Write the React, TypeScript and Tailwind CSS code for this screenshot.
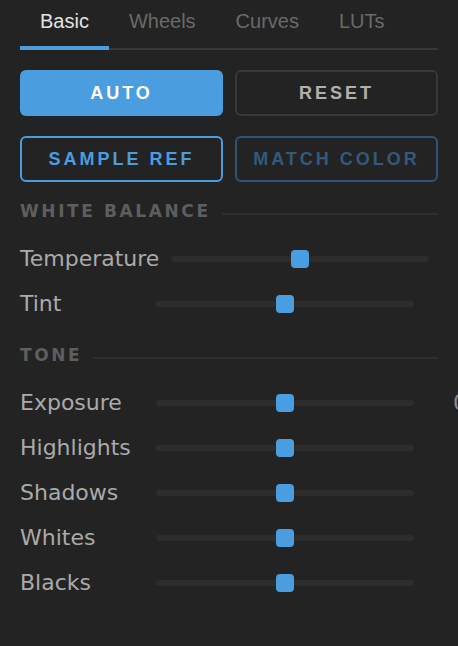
import { useState } from "react"

const tabs = ["Basic", "Wheels", "Curves", "LUTs"]

type Adjustment = { label: string; value: string }

const whiteBalance: Adjustment[] = [
  { label: "Temperature", value: "0" },
  { label: "Tint", value: "0" },
]

const tone: Adjustment[] = [
  { label: "Exposure", value: "0.00" },
  { label: "Highlights", value: "0" },
  { label: "Shadows", value: "0" },
  { label: "Whites", value: "0" },
  { label: "Blacks", value: "0" },
]

function SectionHeading({ title }: { title: string }) {
  return (
    <div className="mt-[19px] mb-[15px] flex h-5 items-center gap-[11px]">
      <span className="font-['DejaVu_Sans',sans-serif] text-[17px] leading-5 font-bold tracking-[2.6px] text-[#5e5e5e]">
        {title}
      </span>
      <div className="mt-[6px] h-[2px] flex-1 bg-[#2e2e2e]" />
    </div>
  )
}

function SliderRow({ label, value }: Adjustment) {
  return (
    <div className="flex h-[45px] items-center font-['DejaVu_Sans',sans-serif]">
      <span className="min-w-[124px] shrink-0 text-[22px] text-[#aaaaaa]">{label}</span>
      <div className="relative ml-3 h-[6px] w-[258px] shrink-0 rounded-full bg-[#2d2d2d]">
        <div className="absolute top-1/2 left-1/2 h-[18px] w-[18px] -translate-x-1/2 -translate-y-1/2 rounded-[4px] bg-[#4a9dde]" />
      </div>
      <span className="ml-4 w-[72px] shrink-0 text-right text-[22px] text-[#8a8a8a]">{value}</span>
    </div>
  )
}

export default function App() {
  const [active, setActive] = useState("Basic")

  return (
    <div className="h-screen w-full overflow-hidden bg-[#232323] px-5">
      <div className="flex border-b-2 border-[#383838] font-['Liberation_Sans',sans-serif]">
        {tabs.map((tab) => (
          <button
            key={tab}
            onClick={() => setActive(tab)}
            className={
              tab === active
                ? "-mb-[2px] border-b-4 border-[#4a9dde] px-5 pt-[9px] pb-[13px] text-[20px] leading-6 text-[#e4e4e4]"
                : "-mb-[2px] border-b-4 border-transparent px-5 pt-[9px] pb-[13px] text-[20px] leading-6 text-[#6a6a6a]"
            }
          >
            {tab}
          </button>
        ))}
      </div>

      <div className="mt-5 grid grid-cols-2 gap-x-3 gap-y-5 font-['Liberation_Sans',sans-serif] text-[18px] font-bold tracking-[3px]">
        <button className="flex h-[46px] items-center justify-center rounded-md bg-[#4a9dde] text-white">
          AUTO
        </button>
        <button className="flex h-[46px] items-center justify-center rounded-md border-2 border-[#393939] text-[#b3b0ac]">
          RESET
        </button>
        <button className="flex h-[46px] items-center justify-center rounded-md border-2 border-[#4a9dde] text-[#4a9dde]">
          SAMPLE REF
        </button>
        <button className="flex h-[46px] items-center justify-center rounded-md border-2 border-[#2e5476] text-[#35597b]">
          MATCH COLOR
        </button>
      </div>

      <SectionHeading title="WHITE BALANCE" />
      {whiteBalance.map((a) => (
        <SliderRow key={a.label} {...a} />
      ))}

      <SectionHeading title="TONE" />
      {tone.map((a) => (
        <SliderRow key={a.label} {...a} />
      ))}
    </div>
  )
}
